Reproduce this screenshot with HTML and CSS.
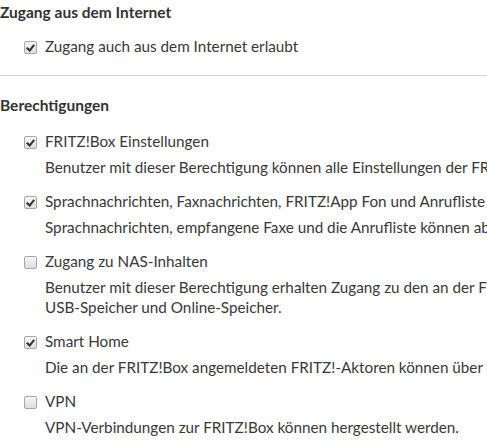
FILE: index.html
```html
<!DOCTYPE html>
<html lang="de">
<head>
<meta charset="utf-8">
<title>Benutzer</title>
<link rel="stylesheet" href="styles.css">
</head>
<body>
<div class="page">
  <section class="group">
    <h2 class="group-title">Zugang aus dem Internet</h2>
    <div class="check-row first">
      <span class="box checked"></span>
      <span class="label">Zugang auch aus dem Internet erlaubt</span>
    </div>
  </section>
  <hr class="divider">
  <section class="group">
    <h2 class="group-title">Berechtigungen</h2>
    <div class="items">
      <div class="item">
        <div class="check-row">
          <span class="box checked"></span>
          <span class="label">FRITZ!Box Einstellungen</span>
        </div>
        <p class="desc">Benutzer mit dieser Berechtigung können alle Einstellungen der FRITZ!Box sehen und bearbeiten.</p>
      </div>
      <div class="item">
        <div class="check-row">
          <span class="box checked"></span>
          <span class="label">Sprachnachrichten, Faxnachrichten, FRITZ!App Fon und Anrufliste</span>
        </div>
        <p class="desc">Sprachnachrichten, empfangene Faxe und die Anrufliste können abgehört bzw. angesehen werden.</p>
      </div>
      <div class="item">
        <div class="check-row">
          <span class="box"></span>
          <span class="label">Zugang zu NAS-Inhalten</span>
        </div>
        <p class="desc">Benutzer mit dieser Berechtigung erhalten Zugang zu den an der FRITZ!Box angeschlossenen<br>USB-Speicher und Online-Speicher.</p>
      </div>
      <div class="item">
        <div class="check-row">
          <span class="box checked"></span>
          <span class="label">Smart Home</span>
        </div>
        <p class="desc">Die an der FRITZ!Box angemeldeten FRITZ!-Aktoren können über die Benutzeroberfläche bedient werden.</p>
      </div>
      <div class="item">
        <div class="check-row">
          <span class="box"></span>
          <span class="label">VPN</span>
        </div>
        <p class="desc">VPN-Verbindungen zur FRITZ!Box können hergestellt werden.</p>
      </div>
    </div>
  </section>
</div>
</body>
</html>
```

FILE: styles.css
```css
html, body {
  margin: 0;
  padding: 0;
  background: #ffffff;
  overflow: hidden;
}

body {
  font-family: Lato, "Open Sans", "Liberation Sans", sans-serif;
  font-size: 15.25px;
  line-height: 20px;
  color: #383838;
}

.page {
  padding-top: 2px;
  width: 800px;
}

.group-title {
  margin: 0;
  font-size: 15.5px;
  line-height: 20px;
  font-weight: 700;
  color: #333333;
}

.check-row {
  display: flex;
  align-items: flex-start;
  gap: 8px;
  padding-left: 24px;
  height: 20px;
  white-space: nowrap;
}

.check-row.first {
  margin-top: 14px;
}

.box {
  flex: none;
  box-sizing: border-box;
  width: 13px;
  height: 13px;
  margin-top: 5px;
  border: 1px solid #a6a6a6;
  border-radius: 2px;
  background: linear-gradient(#f6f6f6, #dedede);
  position: relative;
}

.box.checked::after {
  content: "";
  position: absolute;
  left: 3px;
  top: 1px;
  width: 3px;
  height: 6px;
  border-right: 2px solid #2e2e2e;
  border-bottom: 2px solid #2e2e2e;
  transform: rotate(40deg);
}

.divider {
  border: 0;
  height: 1px;
  background: #d6d6d6;
  margin: 19px 0 19px 0;
}

.items {
  display: flex;
  flex-direction: column;
  gap: 14px;
  margin-top: 16px;
}

.desc {
  margin: 6px 0 0 0;
  padding-left: 45px;
  white-space: nowrap;
}
```
